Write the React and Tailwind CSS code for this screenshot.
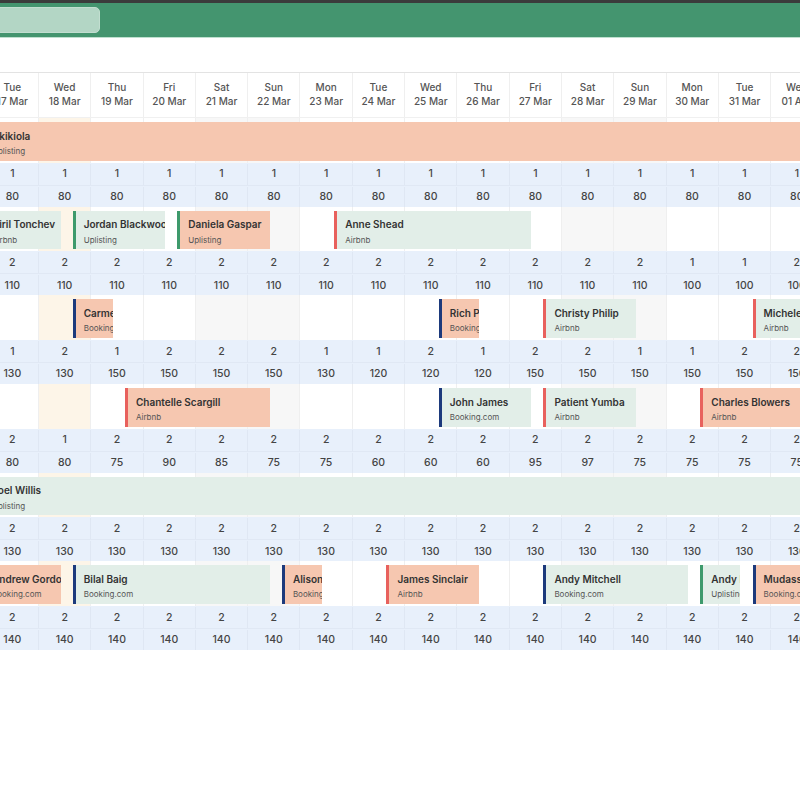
import React from "react";

const W = 52.3;

const days = [
  ["Tue", "17 Mar"], ["Wed", "18 Mar"], ["Thu", "19 Mar"], ["Fri", "20 Mar"],
  ["Sat", "21 Mar"], ["Sun", "22 Mar"], ["Mon", "23 Mar"], ["Tue", "24 Mar"],
  ["Wed", "25 Mar"], ["Thu", "26 Mar"], ["Fri", "27 Mar"], ["Sat", "28 Mar"],
  ["Sun", "29 Mar"], ["Mon", "30 Mar"], ["Tue", "31 Mar"], ["Wed", "01 Apr"],
];

const laneBg = (i) =>
  i === 1 ? "bg-[#fdf5e8]" : i === 4 || i === 5 || i === 11 || i === 12 ? "bg-[#f7f7f7]" : "bg-white";

const SRC = {
  up: { label: "Uplisting", border: "border-[#3e9a6c]" },
  air: { label: "Airbnb", border: "border-[#e8615d]" },
  bk: { label: "Booking.com", border: "border-[#1d3a7c]" },
};

const groups = [
  {
    bars: [{ s: null, e: 17, name: "Akikiola", src: "up", tone: "s" }],
    avail: Array(16).fill(1),
    price: Array(16).fill(80),
  },
  {
    bars: [
      { s: null, e: 1, name: "Kiril Tonchev", src: "air", tone: "m" },
      { s: 1, e: 3, name: "Jordan Blackwood", src: "up", tone: "m" },
      { s: 3, e: 5, name: "Daniela Gaspar", src: "up", tone: "s" },
      { s: 6, e: 10, name: "Anne Shead", src: "air", tone: "m" },
    ],
    avail: [2, 2, 2, 2, 2, 2, 2, 2, 2, 2, 2, 2, 2, 1, 1, 2],
    price: [110, 110, 110, 110, 110, 110, 110, 110, 110, 110, 110, 110, 110, 100, 100, 100],
  },
  {
    bars: [
      { s: 1, e: 2, name: "Carmen Ruiz", src: "bk", tone: "s" },
      { s: 8, e: 9, name: "Rich Peters", src: "bk", tone: "s" },
      { s: 10, e: 12, name: "Christy Philip", src: "air", tone: "m" },
      { s: 14, e: 17, name: "Michele Rossi", src: "air", tone: "m" },
    ],
    avail: [1, 2, 1, 2, 2, 2, 1, 1, 2, 1, 2, 2, 1, 1, 2, 2],
    price: [130, 130, 150, 150, 150, 150, 130, 120, 120, 120, 150, 150, 150, 150, 150, 150],
  },
  {
    bars: [
      { s: 2, e: 5, name: "Chantelle Scargill", src: "air", tone: "s" },
      { s: 8, e: 10, name: "John James", src: "bk", tone: "m" },
      { s: 10, e: 12, name: "Patient Yumba", src: "air", tone: "m" },
      { s: 13, e: 17, name: "Charles Blowers", src: "air", tone: "s" },
    ],
    avail: [2, 1, 2, 2, 2, 2, 2, 2, 2, 2, 2, 2, 2, 2, 2, 2],
    price: [80, 80, 75, 90, 85, 75, 75, 60, 60, 60, 95, 97, 75, 75, 75, 75],
  },
  {
    bars: [{ s: null, e: 17, name: "Joel Willis", src: "up", tone: "m" }],
    avail: Array(16).fill(2),
    price: Array(16).fill(130),
  },
  {
    bars: [
      { s: null, e: 1, name: "Andrew Gordon", src: "bk", tone: "s" },
      { s: 1, e: 5, name: "Bilal Baig", src: "bk", tone: "m" },
      { s: 5, e: 6, name: "Alison Grant", src: "bk", tone: "s" },
      { s: 7, e: 9, name: "James Sinclair", src: "air", tone: "s" },
      { s: 10, e: 13, name: "Andy Mitchell", src: "bk", tone: "m" },
      { s: 13, e: 14, name: "Andy Ibrahim", src: "up", tone: "m" },
      { s: 14, e: 17, name: "Mudassar Khan", src: "bk", tone: "s" },
    ],
    avail: Array(16).fill(2),
    price: Array(16).fill(140),
  },
];

function Bar({ b }) {
  const left = b.s === null ? -4.7 : (b.s + 0.663) * W;
  const right = (b.e + 0.43) * W;
  const src = SRC[b.src];
  return (
    <div
      className={`absolute top-[4px] h-[38.5px] overflow-hidden whitespace-nowrap border-l-[3px] pl-[8px] pt-[7.5px] ${src.border} ${
        b.tone === "s" ? "bg-[#f6c7b0]" : "bg-[#e2eee8]"
      }`}
      style={{ left, width: right - left }}
    >
      <div className="text-[10px] leading-[13px] font-semibold text-[#333333]">{b.name}</div>
      <div className="mt-[3.5px] text-[8px] leading-[10px] text-[#555555]">{src.label}</div>
    </div>
  );
}

function Group({ g }) {
  return (
    <div>
      <div className="relative h-[44.7px] flex">
        {days.map((d, i) => (
          <div key={i} className={`w-[52.3px] shrink-0 border-l border-[#efefef] ${laneBg(i)}`} />
        ))}
        {g.bars.map((b, i) => (
          <Bar key={i} b={b} />
        ))}
      </div>
      <div className="flex h-[22px] bg-[#e8f0fb] pt-[1px]">
        {g.avail.map((v, i) => (
          <div
            key={i}
            className="w-[52.3px] shrink-0 border-l border-[#dfe7f3] flex items-center justify-center text-[10.5px] font-medium text-[#444444]"
          >
            {v}
          </div>
        ))}
      </div>
      <div className="flex h-[22px] bg-[#e8f0fb] border-t border-[#e0e8f4] pt-[1px]">
        {g.price.map((v, i) => (
          <div
            key={i}
            className="w-[52.3px] shrink-0 border-l border-[#dfe7f3] flex items-center justify-center text-[10.5px] font-medium text-[#444444]"
          >
            {v}
          </div>
        ))}
      </div>
    </div>
  );
}

export default function App() {
  return (
    <div className="w-[800px] h-[800px] bg-white overflow-hidden font-['Inter',sans-serif]">
      <div className="h-[3px] bg-[#3b3b3b]" />
      <div className="h-[35px] bg-[#44956f] border-b border-[#bfe0cf] flex items-center">
        <div className="ml-[-10px] w-[110px] h-[26px] rounded-[5px] bg-[#b3d6c5] border border-[#c2ded0]" />
      </div>
      <div className="h-[34px]" />
      <div className="ml-[-14.3px] w-[836.8px]">
        <div className="flex h-[46px] border-t border-[#e3e3e3] border-b border-b-[#f0f0f0]">
          {days.map((d, i) => (
            <div
              key={i}
              className="w-[52.3px] shrink-0 border-l border-[#efefef] pt-[7px] flex flex-col items-center text-[10px] leading-[14px] font-medium text-[#555555]"
            >
              <span>{d[0]}</span>
              <span>{d[1]}</span>
            </div>
          ))}
        </div>
        {groups.map((g, i) => (
          <Group key={i} g={g} />
        ))}
      </div>
    </div>
  );
}
